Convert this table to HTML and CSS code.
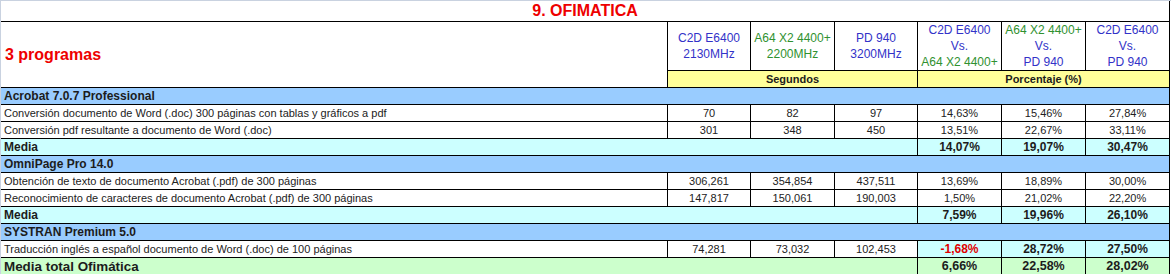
FILE: index.html
```html
<!DOCTYPE html>
<html lang="es">
<head>
<meta charset="utf-8">
<title>9. OFIMATICA</title>
<link rel="stylesheet" href="styles.css">
</head>
<body>
<div class="sheet">
<table class="bench">
<colgroup>
<col class="c-label">
<col class="c-a"><col class="c-b"><col class="c-a">
<col class="c-b"><col class="c-b"><col class="c-b">
</colgroup>
<tr class="r-title">
<td colspan="7" class="title edge">9. OFIMATICA</td>
</tr>
<tr class="r-head">
<td rowspan="2" class="programs line">3 programas</td>
<td class="cpu line"><span class="blue">C2D E6400</span><br><span class="blue">2130MHz</span></td>
<td class="cpu line"><span class="green">A64 X2 4400+</span><br><span class="green">2200MHz</span></td>
<td class="cpu line"><span class="blue">PD 940</span><br><span class="blue">3200MHz</span></td>
<td class="cpu line"><span class="blue">C2D E6400</span><br><span class="blue">Vs.</span><br><span class="green">A64 X2 4400+</span></td>
<td class="cpu line"><span class="green">A64 X2 4400+</span><br><span class="blue">Vs.</span><br><span class="blue">PD 940</span></td>
<td class="cpu line edge"><span class="blue">C2D E6400</span><br><span class="blue">Vs.</span><br><span class="blue">PD 940</span></td>
</tr>
<tr class="r-unit">
<td colspan="3" class="unit line">Segundos</td>
<td colspan="3" class="unit line edge">Porcentaje (%)</td>
</tr>

<tr class="r-row">
<td colspan="7" class="section edge">Acrobat 7.0.7 Professional</td>
</tr>
<tr class="r-row">
<td class="label line">Conversión documento de Word (.doc) 300 páginas con tablas y gráficos a pdf</td>
<td class="num line">70</td><td class="num line">82</td><td class="num line">97</td>
<td class="num line">14,63%</td><td class="num line">15,46%</td><td class="num line edge">27,84%</td>
</tr>
<tr class="r-row">
<td class="label line">Conversión pdf resultante a documento de Word (.doc)</td>
<td class="num line">301</td><td class="num line">348</td><td class="num line">450</td>
<td class="num line">13,51%</td><td class="num line">22,67%</td><td class="num line edge">33,11%</td>
</tr>
<tr class="r-row">
<td colspan="4" class="avg-label line">Media</td>
<td class="avg line">14,07%</td><td class="avg line">19,07%</td><td class="avg line edge">30,47%</td>
</tr>

<tr class="r-row">
<td colspan="7" class="section edge">OmniPage Pro 14.0</td>
</tr>
<tr class="r-row">
<td class="label line">Obtención de texto de documento Acrobat (.pdf) de 300 páginas</td>
<td class="num line">306,261</td><td class="num line">354,854</td><td class="num line">437,511</td>
<td class="num line">13,69%</td><td class="num line">18,89%</td><td class="num line edge">30,00%</td>
</tr>
<tr class="r-row">
<td class="label line">Reconocimiento de caracteres de documento Acrobat (.pdf) de 300 páginas</td>
<td class="num line">147,817</td><td class="num line">150,061</td><td class="num line">190,003</td>
<td class="num line">1,50%</td><td class="num line">21,02%</td><td class="num line edge">22,20%</td>
</tr>
<tr class="r-row">
<td colspan="4" class="avg-label line">Media</td>
<td class="avg line">7,59%</td><td class="avg line">19,96%</td><td class="avg line edge">26,10%</td>
</tr>

<tr class="r-row">
<td colspan="7" class="section edge">SYSTRAN Premium 5.0</td>
</tr>
<tr class="r-row">
<td class="label line">Traducción inglés a español documento de Word (.doc) de 100 páginas</td>
<td class="num line">74,281</td><td class="num line">73,032</td><td class="num line">102,453</td>
<td class="avg neg line">-1,68%</td><td class="avg line">28,72%</td><td class="avg line edge">27,50%</td>
</tr>
<tr class="r-row">
<td colspan="4" class="total-label line">Media total Ofimática</td>
<td class="total line">6,66%</td><td class="total line">22,58%</td><td class="total line edge">28,02%</td>
</tr>
</table>
</div>
</body>
</html>
```

FILE: styles.css
```css
html, body {
  margin: 0;
  padding: 0;
  background: #ffffff;
}

body {
  font-family: "Liberation Sans", Arial, sans-serif;
  color: #1c1c1c;
}

.sheet {
  width: 1171px;
  height: 274px;
  box-sizing: border-box;
  border-top: 1px solid #c9d2e0;
  border-left: 1px solid #c9d2e0;
  overflow: hidden;
}

.bench {
  border-collapse: separate;
  border-spacing: 0;
  table-layout: fixed;
  width: 1169px;
}

.c-label { width: 667px; }
.c-a { width: 83px; }
.c-b { width: 84px; }

.bench td {
  padding: 0;
  border-bottom: 1px solid #000;
  vertical-align: middle;
  white-space: nowrap;
  overflow: hidden;
}

.bench td.line { border-right: 1px solid #000; }
.bench td.edge { border-right: 1px solid #000; }

.r-title { height: 21px; }
.r-head { height: 48px; }
.r-unit { height: 17px; }
.r-row { height: 17px; }

.title {
  text-align: center;
  color: #ee0000;
  font-weight: bold;
  font-size: 16px;
  line-height: 18px;
}

.programs {
  color: #ee0000;
  font-weight: bold;
  font-size: 16px;
  padding-left: 4px !important;
  background: #fff;
}

.cpu {
  text-align: center;
  font-size: 12px;
  line-height: 16px;
}

.blue { color: #3232c8; }
.green { color: #2f912f; }

.unit {
  background: #ffff99;
  text-align: center;
  font-weight: bold;
  font-size: 11px;
}

.section {
  background: #99ccff;
  font-weight: bold;
  font-size: 12px;
  padding-left: 3px !important;
}

.label {
  font-size: 11px;
  padding-left: 3px !important;
  color: #222;
}

.num {
  text-align: center;
  font-size: 11px;
  color: #222;
}

.avg-label {
  background: #ccffff;
  font-weight: bold;
  font-size: 12px;
  padding-left: 3px !important;
}

.avg {
  background: #ccffff;
  text-align: center;
  font-weight: bold;
  font-size: 12px;
}

.neg { color: #e00000; }

.total-label {
  background: #ccffcc;
  font-weight: bold;
  font-size: 13.4px;
  padding-left: 3px !important;
}

.total {
  background: #ccffcc;
  text-align: center;
  font-weight: bold;
  font-size: 12.5px;
}
```
